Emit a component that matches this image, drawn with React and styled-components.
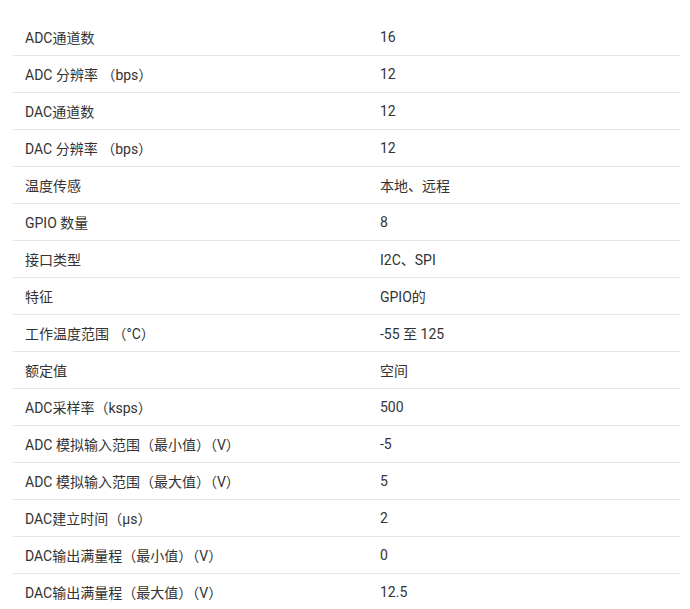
import React from 'react';
import styled, { createGlobalStyle } from 'styled-components';

const GlobalStyle = createGlobalStyle`
  body {
    margin: 0;
    background: #fff;
    font-family: Roboto, "Noto Sans CJK SC", sans-serif;
  }
`;

const Wrapper = styled.div`
  padding: 19px 10px 0 13px;
`;

const Table = styled.table`
  width: 100%;
  border-collapse: collapse;
  table-layout: fixed;
`;

const Row = styled.tr`
  border-bottom: 1px solid #e5e5e5;
`;

const Cell = styled.td`
  height: 36px;
  padding: 0 12px;
  font-size: 14px;
  color: #333;
  vertical-align: middle;
  width: ${(p) => (p.$label ? '331px' : 'auto')};
`;

const specs = [
  ['ADC通道数', '16'],
  ['ADC 分辨率 （bps）', '12'],
  ['DAC通道数', '12'],
  ['DAC 分辨率 （bps）', '12'],
  ['温度传感', '本地、远程'],
  ['GPIO 数量', '8'],
  ['接口类型', 'I2C、SPI'],
  ['特征', 'GPIO的'],
  ['工作温度范围 （°C）', '-55 至 125'],
  ['额定值', '空间'],
  ['ADC采样率（ksps）', '500'],
  ['ADC 模拟输入范围（最小值）（V）', '-5'],
  ['ADC 模拟输入范围（最大值）（V）', '5'],
  ['DAC建立时间（µs）', '2'],
  ['DAC输出满量程（最小值）（V）', '0'],
  ['DAC输出满量程（最大值）（V）', '12.5'],
];

function App() {
  return (
    <>
      <GlobalStyle />
      <Wrapper>
        <Table>
          <tbody>
            {specs.map(([label, value]) => (
              <Row key={label}>
                <Cell $label>{label}</Cell>
                <Cell>{value}</Cell>
              </Row>
            ))}
          </tbody>
        </Table>
      </Wrapper>
    </>
  );
}

export default App;
